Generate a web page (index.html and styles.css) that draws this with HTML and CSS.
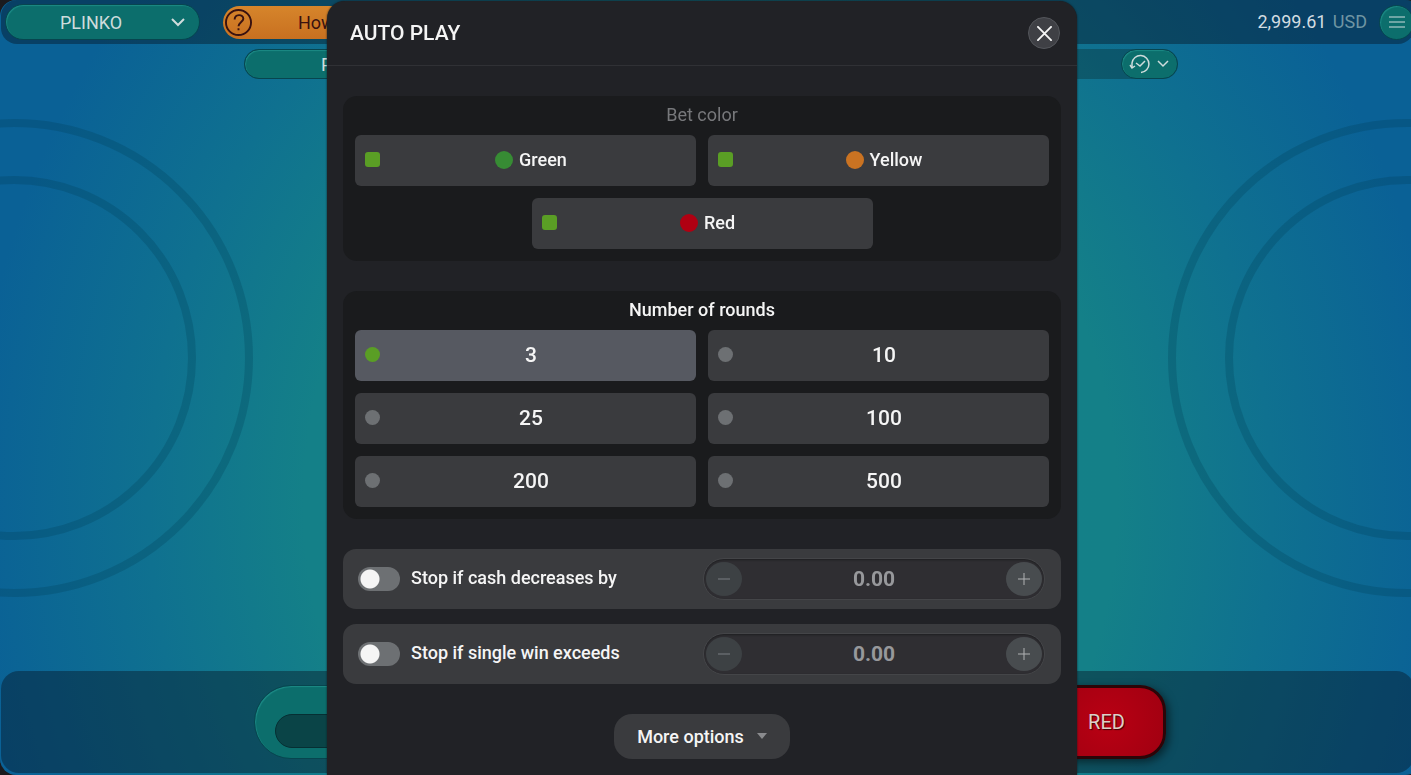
FILE: index.html
```html
<!DOCTYPE html>
<html lang="en">
<head>
    <meta charset="UTF-8">
    <meta name="viewport" content="width=device-width, initial-scale=1.0">
    <title>Plinko - Auto Play</title>
    <link rel="stylesheet" href="styles.css">
</head>
<body>

    <div class="game">

        <!-- Top navigation bar -->
        <header class="topbar">
            <button class="pill game-select">
                <span>PLINKO</span>
                <svg class="chevron" viewBox="0 0 14 10"><path d="M1 2l6 6 6-6"/></svg>
            </button>
            <button class="help-btn">
                <svg class="help-icon" viewBox="0 0 28 28">
                    <circle cx="14" cy="14" r="13"/>
                    <path d="M10 11c0-6 9-6 9-1 0 3-5 4-5 8"/>
                    <path d="M14 20v2"/>
                </svg>
                <span>How</span>
            </button>
            <div class="balance">2,999.61 <span>USD</span></div>
            <button class="pill menu-btn" aria-label="Menu">
                <svg viewBox="0 0 16 12"><path d="M0 1h16M0 6h16M0 11h16"/></svg>
            </button>
        </header>

        <!-- Pins and history -->
        <div class="subbar">
            <button class="pill pins-select">PINS: 14</button>
            <button class="pill history-btn" aria-label="History">
                <svg class="history-icon" viewBox="0 0 22 20">
                    <path d="M3 14V9a8.500 8.500 0 1 1 9 9.500"/>
                    <path d="M1 11l2 3 3-2"/>
                    <path d="M7 9l4 3 5-5"/>
                </svg>
                <svg class="chevron-small" viewBox="0 0 12 8"><path d="M1 1l5 5 5-5"/></svg>
            </button>
        </div>

        <main class="board">
            <div class="ring ring-left"></div>
            <div class="ring ring-inner ring-left"></div>
            <div class="ring ring-right"></div>
            <div class="ring ring-inner ring-right"></div>
        </main>

        <!-- Betting controls -->
        <footer class="bottombar">
            <div class="controls">
                <div class="pill bet-box">
                    <input type="text" class="bet-input" value="1.00" aria-label="Bet USD">
                </div>
                <button class="red-btn">RED</button>
            </div>
        </footer>
    </div>

    <!-- Auto play dialog -->
    <div class="overlay">
        <div class="dialog" role="dialog" aria-labelledby="dialog-title">
            <div class="dialog-header">
                <h2 id="dialog-title">AUTO PLAY</h2>
                <button class="close-btn" aria-label="Close">
                    <svg viewBox="0 0 16 16"><path d="M1 1l14 14M15 1L1 15"/></svg>
                </button>
            </div>

            <div class="dialog-body">
                <div class="panel" role="group" aria-labelledby="color-title">
                    <h3 id="color-title" class="muted">Bet color</h3>
                    <div class="options">
                        <label class="option">
                            <input type="checkbox" checked>
                            <span class="option-text"><i class="dot green"></i>Green</span>
                        </label>
                        <label class="option">
                            <input type="checkbox" checked>
                            <span class="option-text"><i class="dot yellow"></i>Yellow</span>
                        </label>
                        <label class="option">
                            <input type="checkbox" checked>
                            <span class="option-text"><i class="dot red"></i>Red</span>
                        </label>
                    </div>
                </div>

                <div class="panel" role="group" aria-labelledby="rounds-title">
                    <h3 id="rounds-title">Number of rounds</h3>
                    <div class="options rounds">
                        <label class="option"><input type="radio" name="rounds" checked><span class="option-text">3</span></label>
                        <label class="option"><input type="radio" name="rounds"><span class="option-text">10</span></label>
                        <label class="option"><input type="radio" name="rounds"><span class="option-text">25</span></label>
                        <label class="option"><input type="radio" name="rounds"><span class="option-text">100</span></label>
                        <label class="option"><input type="radio" name="rounds"><span class="option-text">200</span></label>
                        <label class="option"><input type="radio" name="rounds"><span class="option-text">500</span></label>
                    </div>
                </div>

                <div class="limits">
                    <div class="limit">
                        <label class="limit-label">
                            <input type="checkbox" class="toggle">
                            <span>Stop if cash decreases by</span>
                        </label>
                        <div class="stepper">
                            <button class="step minus" aria-label="Decrease"><svg viewBox="0 0 12 12"><path d="M0 6h12"/></svg></button>
                            <input type="text" value="0.00" aria-label="Cash decrease limit">
                            <button class="step" aria-label="Increase"><svg viewBox="0 0 12 12"><path d="M0 6h12M6 0v12"/></svg></button>
                        </div>
                    </div>
                    <div class="limit">
                        <label class="limit-label">
                            <input type="checkbox" class="toggle">
                            <span>Stop if single win exceeds</span>
                        </label>
                        <div class="stepper">
                            <button class="step minus" aria-label="Decrease"><svg viewBox="0 0 12 12"><path d="M0 6h12"/></svg></button>
                            <input type="text" value="0.00" aria-label="Single win limit">
                            <button class="step" aria-label="Increase"><svg viewBox="0 0 12 12"><path d="M0 6h12M6 0v12"/></svg></button>
                        </div>
                    </div>
                </div>

                <button class="more-btn">
                    More options
                    <svg viewBox="0 0 10 6"><path d="M0 0h10L5 6z"/></svg>
                </button>
            </div>
        </div>
    </div>

</body>
</html>
```
FILE: styles.css
```css
* {
    box-sizing: border-box;
}

body {
    margin: 0;
    overflow: hidden;
    background: #1b1b1e;
    font-family: Roboto, "Liberation Sans", sans-serif;
    font-size: 18px;
    color: #f5f5f5;
}

button,
input {
    font: inherit;
    color: inherit;
    margin: 0;
    padding: 0;
    border: none;
}

button {
    cursor: pointer;
}

svg {
    display: block;
    fill: none;
    stroke: currentColor;
}

/* Game screen */
.game {
    display: flex;
    flex-direction: column;
    width: calc(100% + 10px);
    height: 100vh;
    border-radius: 16px;
    overflow: hidden;
    background: radial-gradient(ellipse 52% 106% at 50% 65%, #148188 0%, #148088 55%, #0f7190 76%, #0a6196 100%);
}

.pill {
    background: #0c6e6c;
    border: 1px solid #07454f;
    border-radius: 40px;
    box-shadow: inset 1px 1px 1px #1c8a86;
    color: #cfdcdc;
}

.topbar {
    display: flex;
    align-items: center;
    height: 44px;
    margin: 0 7px 0 1px;
    padding-left: 4px;
    border-radius: 16px;
    border-top-right-radius: 0;
    background: rgba(8, 20, 34, 0.42);
}

.game-select {
    display: flex;
    align-items: center;
    justify-content: space-between;
    width: 195px;
    height: 36px;
    padding: 0 14px 0 54px;
}

.chevron {
    width: 14px;
    height: 10px;
    stroke-width: 2;
}

.help-btn {
    display: flex;
    align-items: center;
    gap: 46px;
    width: 195px;
    height: 33px;
    margin-left: 23px;
    padding-left: 2px;
    border-radius: 20px;
    background: linear-gradient(#d6852b, #c87020);
    color: #3a1210;
}

.help-icon {
    width: 27px;
    height: 27px;
    stroke-width: 2;
}

.balance {
    margin-left: auto;
    margin-right: 12px;
    padding-bottom: 2px;
    color: #d3dde2;
}

.balance span {
    margin-left: 2px;
    color: #6f95a3;
}

.menu-btn {
    display: grid;
    place-items: center;
    width: 35px;
    height: 35px;
}

.menu-btn svg {
    width: 16px;
    height: 12px;
    stroke-width: 1;
}

.subbar {
    display: flex;
    justify-content: space-between;
    width: 934px;
    height: 30px;
    margin: 5px auto 0;
    border-radius: 20px;
    background: rgba(8, 40, 44, 0.35);
}

.pins-select {
    width: 224px;
}

.history-btn {
    display: flex;
    align-items: center;
    justify-content: center;
    gap: 6px;
    width: 57px;
}

.history-icon {
    width: 22px;
    height: 20px;
    stroke-width: 1.5;
}

.chevron-small {
    width: 12px;
    height: 8px;
    stroke-width: 1.5;
}

/* Decorative rings on both sides of the board */
.board {
    position: relative;
    flex: 1;
}

.ring {
    position: absolute;
    top: 50%;
    width: 478px;
    height: 478px;
    margin: -256px -225px 0;
    border: 8px solid rgba(0, 60, 85, 0.26);
    border-radius: 50%;
}

.ring-inner {
    width: 364px;
    height: 364px;
    margin: -199px -168px 0;
}

.ring-left {
    left: 0;
}

.ring-right {
    right: 0;
}

.bottombar {
    height: 102px;
    margin: 0 7px 2px 1px;
    padding-top: 14px;
    border-radius: 18px;
    background: rgba(8, 20, 34, 0.42);
}

.controls {
    display: flex;
    justify-content: space-between;
    width: 916px;
    margin: 0 auto;
    padding-left: 4px;
}

.bet-box {
    display: flex;
    align-items: flex-end;
    width: 340px;
    height: 74px;
    padding: 0 20px 10px;
}

.bet-input {
    width: 160px;
    height: 34px;
    border: 1px solid #062f33;
    border-radius: 20px;
    background: #0a4447;
    text-align: center;
}

.red-btn {
    width: 118px;
    height: 74px;
    border: 3px solid #2c0508;
    border-radius: 26px;
    background: radial-gradient(circle, #b90013, #a00011);
    box-shadow: 3px 3px 8px rgba(0, 0, 0, 0.5);
    color: #dcd0c8;
    font-size: 20px;
    text-shadow: 1px 1px 1px #3c0006;
}

/* Dialog */
.overlay {
    position: fixed;
    inset: 0;
    display: flex;
    justify-content: center;
    padding: 1px 7px 0 0;
}

.dialog {
    width: 750px;
    border-radius: 18px 18px 0 0;
    background: #212226;
    box-shadow: 0 0 2px #10181c;
}

.dialog-header {
    display: flex;
    align-items: center;
    justify-content: space-between;
    height: 65px;
    padding: 0 17px 0 23px;
    border-bottom: 1px solid #303135;
}

h2 {
    margin: 0;
    font-size: 21px;
    font-weight: 500;
}

.close-btn {
    display: grid;
    place-items: center;
    width: 32px;
    height: 32px;
    border: 1px solid #54565b;
    border-radius: 50%;
    background: #3f4045;
}

.close-btn svg {
    width: 15px;
    height: 15px;
    stroke-width: 2;
    stroke-linecap: round;
}

.dialog-body {
    display: flex;
    flex-direction: column;
    gap: 30px;
    padding: 30px 16px;
}

.panel {
    padding: 0 12px 12px;
    border-radius: 14px;
    background: #1a1b1d;
}

h3 {
    margin: 0;
    padding-bottom: 2px;
    font-size: 18px;
    font-weight: 500;
    line-height: 37px;
    text-align: center;
}

.muted {
    color: #77787b;
    font-weight: 400;
}

.options {
    display: flex;
    flex-wrap: wrap;
    justify-content: center;
    gap: 12px;
}

.option {
    display: flex;
    align-items: center;
    width: calc(50% - 6px);
    height: 51px;
    padding: 0 14px 2px 10px;
    border-radius: 6px;
    background: #3a3b3e;
    font-weight: 500;
    cursor: pointer;
}

.option input {
    appearance: none;
    width: 15px;
    height: 15px;
    border-radius: 3px;
    background: #6d7073;
}

.option input[type="radio"] {
    border-radius: 50%;
}

.option input:checked {
    background: #5a9e25;
}

.option-text {
    flex: 1;
    display: flex;
    align-items: center;
    justify-content: center;
    gap: 6px;
}

.dot {
    width: 18px;
    height: 18px;
    border-radius: 50%;
}

.green {
    background: #378c34;
}

.yellow {
    background: #ca7322;
}

.red {
    background: #b00012;
}

.rounds .option {
    font-size: 21px;
}

.rounds .option:has(input:checked) {
    background: #565961;
}

.limits {
    display: flex;
    flex-direction: column;
    gap: 15px;
}

.limit {
    display: flex;
    align-items: center;
    justify-content: space-between;
    height: 60px;
    padding: 0 16px 1px 15px;
    border-radius: 13px;
    background: #3a3b3e;
}

.limit-label {
    display: flex;
    align-items: center;
    gap: 11px;
    font-weight: 500;
}

.limit-label span {
    padding-bottom: 2px;
}

.toggle {
    appearance: none;
    width: 42px;
    height: 24px;
    border-radius: 12px;
    background: radial-gradient(circle at 12px 12px, #f5f5f5 9px, #6d7073 10px);
}

.stepper {
    display: flex;
    align-items: center;
    width: 342px;
    height: 42px;
    padding: 0 2px;
    border: 1px solid #444548;
    border-radius: 21px;
    background: #2f2e32;
    box-shadow: inset 0 1px 2px #1e1f21;
}

.stepper input {
    flex: 1;
    min-width: 0;
    background: none;
    color: #97989b;
    font-size: 21px;
    font-weight: 700;
    text-align: center;
}

.step {
    display: grid;
    place-items: center;
    width: 36px;
    height: 34px;
    border-radius: 50%;
    background: #484c4f;
    color: #b0b2b4;
}

.minus {
    background: #3d4144;
    color: #7b7f82;
}

.step svg {
    width: 12px;
    height: 12px;
}

.more-btn {
    display: flex;
    align-items: center;
    align-self: center;
    gap: 13px;
    height: 45px;
    padding: 0 23px 1px;
    border-radius: 18px;
    background: #3a3b3e;
    font-weight: 500;
}

.more-btn svg {
    width: 10px;
    height: 6px;
    fill: #8a8b8e;
    stroke: none;
}
```
